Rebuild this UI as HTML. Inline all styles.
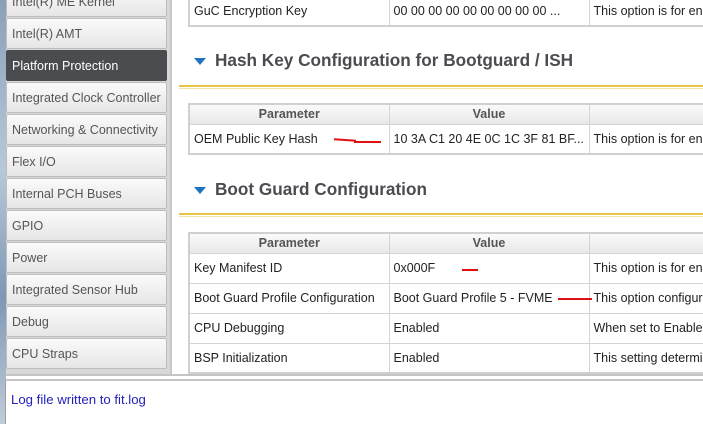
<!DOCTYPE html>
<html><head><meta charset="utf-8"><style>
*{margin:0;padding:0;box-sizing:border-box}
body{width:703px;height:424px;overflow:hidden;background:#fff;font-family:"Liberation Sans",sans-serif;font-size:12px;color:#222;position:relative}
.strip{position:absolute;left:0;top:0;width:6px;height:424px;background:linear-gradient(#8aa0b8,#b8c8d8 40%,#7f97b5 70%,#c0ccd8)}
.side{position:absolute;left:6px;top:0;width:164px;height:377px;background:#d8d8d8}
.btn{position:absolute;left:0;width:161px;height:31px;background:linear-gradient(#fafafa,#e6e6e6);border:1px solid #bdbdbd;border-radius:2px;color:#555;padding-left:5px;line-height:30px;font-size:12.5px;white-space:nowrap}
.btn.sel{background:#4a4c50;color:#fff;border-color:#4a4c50}
.panel{position:absolute;left:170px;top:0;width:533px;height:374px;background:#fff;border-left:2px solid #c8c8c8}
.sep{position:absolute;left:6px;top:374px;width:697px;height:7px;background:#fff;border-top:2px solid #c4c4c4;border-bottom:2px solid #c4c4c4}
table{position:absolute;left:16px;border-collapse:collapse;table-layout:fixed;width:540px;border:2px solid #d0d0d0}
td,th{border:1px solid #d4d4d4;padding-left:4px;white-space:nowrap;overflow:hidden;font-size:12.5px;text-align:left;font-weight:normal}
th{background:linear-gradient(#fafafa,#e8e8e8);color:#555;font-weight:bold;text-align:center;height:20px;padding:0}
td{height:30px}
h2{position:absolute;left:43px;font-size:17.2px;font-weight:bold;color:#4a4c50;white-space:nowrap}
.tri{position:absolute;left:22px;width:0;height:0;border-left:6px solid transparent;border-right:6px solid transparent;border-top:7px solid #1f72c0}
.gold{position:absolute;left:7px;width:530px;height:4px;border-top:2px solid #e8c24a;border-bottom:1px solid #f3e3a6}
.red{position:absolute;height:2px;background:#e01010}
.log{position:absolute;left:11px;top:392px;color:#2222bb;font-size:13.2px}
.lline{position:absolute;left:5px;top:381px;width:1px;height:43px;background:#a0a0a0}
</style></head><body>
<div class="strip"></div>
<div class="side">
<div class="btn" style="top:-14px">Intel(R) ME Kernel</div>
<div class="btn" style="top:18px">Intel(R) AMT</div>
<div class="btn sel" style="top:50px">Platform Protection</div>
<div class="btn" style="top:82px">Integrated Clock Controller</div>
<div class="btn" style="top:114px">Networking &amp; Connectivity</div>
<div class="btn" style="top:146px">Flex I/O</div>
<div class="btn" style="top:178px">Internal PCH Buses</div>
<div class="btn" style="top:210px">GPIO</div>
<div class="btn" style="top:242px">Power</div>
<div class="btn" style="top:274px">Integrated Sensor Hub</div>
<div class="btn" style="top:306px">Debug</div>
<div class="btn" style="top:338px">CPU Straps</div>
</div>
<div class="panel">
<table style="top:-5px"><colgroup><col style="width:200px"><col style="width:200px"><col></colgroup>
<tr><td>GuC Encryption Key</td><td>00 00 00 00 00 00 00 00 00 ...</td><td>This option is for enabling</td></tr></table>
<div class="tri" style="top:58px"></div><h2 style="top:50px">Hash Key Configuration for Bootguard / ISH</h2>
<div class="gold" style="top:85px"></div>
<table style="top:103px"><colgroup><col style="width:200px"><col style="width:200px"><col></colgroup>
<tr><th>Parameter</th><th>Value</th><th></th></tr>
<tr><td>OEM Public Key Hash</td><td>10 3A C1 20 4E 0C 1C 3F 81 BF...</td><td>This option is for enabling</td></tr></table>
<div class="tri" style="top:187px"></div><h2 style="top:179px">Boot Guard Configuration</h2>
<div class="gold" style="top:213px"></div>
<table style="top:232px"><colgroup><col style="width:200px"><col style="width:200px"><col></colgroup>
<tr><th>Parameter</th><th>Value</th><th></th></tr>
<tr><td>Key Manifest ID</td><td>0x000F</td><td>This option is for enabling</td></tr>
<tr><td>Boot Guard Profile Configuration</td><td>Boot Guard Profile 5 - FVME</td><td>This option configures</td></tr>
<tr><td>CPU Debugging</td><td>Enabled</td><td>When set to Enabled</td></tr>
<tr><td>BSP Initialization</td><td>Enabled</td><td>This setting determines</td></tr></table>
<div class="red" style="left:162px;top:139px;width:22px;transform:rotate(4deg)"></div>
<div class="red" style="left:182px;top:141px;width:27px"></div>
<div class="red" style="left:290px;top:269px;width:16px"></div>
<div class="red" style="left:386px;top:298px;width:34px"></div>
</div>
<div class="sep"></div>
<div class="lline"></div>
<div class="log">Log file written to fit.log</div>
</body></html>
